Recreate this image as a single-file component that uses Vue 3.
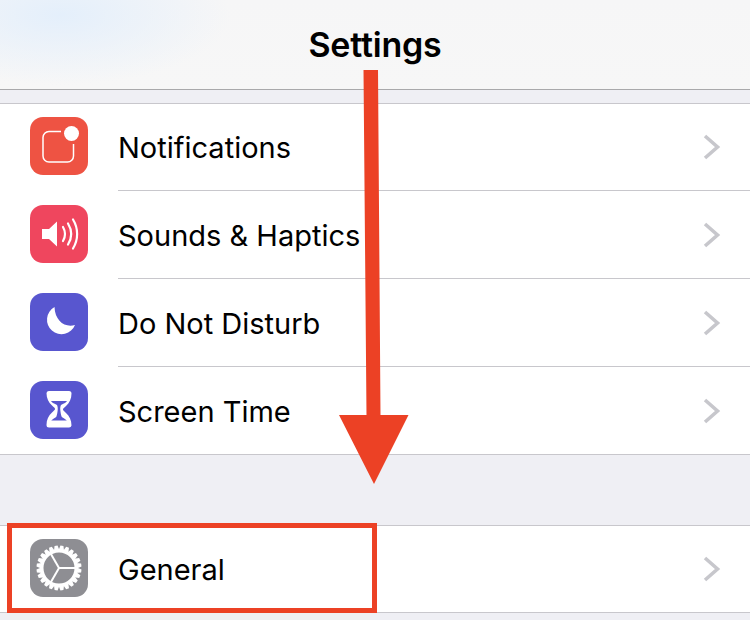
<script setup>
const firstGroup = [
  { label: 'Notifications', icon: 'notif' },
  { label: 'Sounds & Haptics', icon: 'sound' },
  { label: 'Do Not Disturb', icon: 'moon' },
  { label: 'Screen Time', icon: 'hour' },
]
const teeth = Array.from({ length: 24 }, (_, i) => i * 15)
</script>

<template>
  <div class="screen">
    <header class="nav"><h1>Settings</h1></header>
    <div class="gap-top"></div>
    <section class="group">
      <div v-for="row in firstGroup" :key="row.label" class="row">
        <span class="icon" :class="row.icon">
          <svg v-if="row.icon === 'notif'" viewBox="0 0 58 58" width="58" height="58">
            <path d="M31 14.500H19a6 6 0 0 0-6 6V39a6 6 0 0 0 6 6h18.500a6 6 0 0 0 6-6V27" fill="none" stroke="#fff" stroke-width="1.500"/>
            <circle cx="41.500" cy="16.500" r="7.500" fill="#fff"/>
          </svg>
          <svg v-else-if="row.icon === 'sound'" viewBox="0 0 58 58" width="58" height="58">
            <path d="M12 24h7l8-7.500v25L19 34h-7z" fill="#fff"/>
            <g fill="none" stroke="#fff" stroke-width="2.200" stroke-linecap="round">
              <path d="M33 22c2.600 4.500 2.600 9.500 0 14"/>
              <path d="M38 18.500c4 6.500 4 14.500 0 21"/>
              <path d="M43 14.500c5.500 9 5.500 20 0 29"/>
            </g>
          </svg>
          <svg v-else-if="row.icon === 'moon'" viewBox="0 0 58 58" width="58" height="58">
            <path d="M24.500 14A14.500 14.500 0 1 0 45 32C35 35 25 28 24.500 14z" fill="#fff"/>
          </svg>
          <svg v-else viewBox="0 0 58 58" width="58" height="58">
            <path fill="#fff" d="M19 10h20a2.500 2.500 0 0 1 2.500 2.500c0 5-2 9.500-5.500 12.500-2 1.800-3 2.700-3 3.500s1 1.700 3 3.500c3.500 3 5.500 7.500 5.500 12.500A2.500 2.500 0 0 1 39 46.500H19a2.500 2.500 0 0 1-2.500-2.500c0-5 2-9.500 5.500-12.500 2-1.800 3-2.700 3-3.500s-1-1.700-3-3.500c-3.500-3-5.500-7.500-5.500-12.500A2.500 2.500 0 0 1 19 10z"/>
            <path fill="#5856cf" d="M21 20h16c-.8 1.500-2.500 2.300-6 4-.6 1-.9 3-.7 5 .2 2.500.7 5 1.500 7 2 1 3.700 2.300 5 3.500H21.200c1.300-1.200 3-2.500 5-3.500.8-2 1.300-4.500 1.500-7 .2-2-.1-4-.7-5-3.500-1.700-5.200-2.500-6-4z"/>
          </svg>
        </span>
        <div class="body">
          <span class="label">{{ row.label }}</span>
          <svg class="chev" viewBox="0 0 18 26" width="18" height="26"><path d="M2 2l12.500 11L2 24" fill="none" stroke="#c7c7cc" stroke-width="3.600"/></svg>
        </div>
      </div>
    </section>
    <div class="gap-mid"></div>
    <section class="group second">
      <div class="row">
        <span class="icon gear">
          <svg viewBox="0 0 58 58" width="58" height="58">
            <g fill="none" stroke="#fff">
              <circle cx="29" cy="29" r="17" stroke-width="3"/>
              <g stroke-width="2">
                <path d="M29 29H46"/>
                <path d="M29 29L20.500 14.300"/>
                <path d="M29 29L20.500 43.700"/>
              </g>
            </g>
            <g fill="#fff">
              <path v-for="a in teeth" :key="a" :transform="`rotate(${a + 7.500} 29 29)`" d="M27.500 6.500h3l1.400 5.500h-5.800z"/>
            </g>
          </svg>
        </span>
        <div class="body">
          <span class="label">General</span>
          <svg class="chev" viewBox="0 0 18 26" width="18" height="26"><path d="M2 2l12.500 11L2 24" fill="none" stroke="#c7c7cc" stroke-width="3.600"/></svg>
        </div>
      </div>
    </section>

    <div class="highlight"></div>
    <svg class="arrow" viewBox="0 0 750 620" width="750" height="620">
      <path d="M363.500 70H378L380.500 415H408.500L374 484L339 415H366.500z" fill="#ec4125"/>
    </svg>
  </div>
</template>

<style>
html, body { margin: 0; padding: 0; }
</style>

<style scoped>
.screen {
  position: relative;
  width: 750px;
  height: 620px;
  overflow: hidden;
  background: #efeff4;
  font-family: Inter, "Liberation Sans", sans-serif;
  color: #000;
}
.nav {
  height: 89px;
  border-bottom: 1px solid #a9a9ab;
  background:
    radial-gradient(ellipse 170px 70px at 60px 15px, #e4effb 0%, rgba(228, 239, 251, 0) 100%),
    linear-gradient(#f6f6f7, #f7f7f7);
  display: flex;
  justify-content: center;
}
.nav h1 {
  margin: 25px 0 0;
  font-size: 34px;
  line-height: 40px;
  font-weight: 600;
  letter-spacing: -0.2px;
}
.gap-top { height: 13px; }
.gap-mid { height: 70px; }
.group {
  background: #fff;
  border-top: 1px solid #c8c7cc;
  border-bottom: 1px solid #c8c7cc;
}
.row {
  display: flex;
  align-items: stretch;
  padding-left: 30px;
}
.row + .row { height: 88px; }
.row:first-child { height: 86px; }
.icon {
  flex: none;
  align-self: flex-start;
  margin: 13px 30px 0 0;
  width: 58px;
  height: 58px;
  border-radius: 13px;
  overflow: hidden;
}
.row + .row .icon { margin-top: 15px; }
.icon svg { display: block; }
.notif { background: #ee5343; }
.sound { background: #ef465e; }
.moon { background: #5856cf; }
.hour { background: #5856cf; }
.gear { background: #8e8e93; }
.body {
  flex: 1;
  display: flex;
  align-items: center;
  padding-right: 29px;
}
.row + .row .body { border-top: 1px solid #c8c7cc; }
.label {
  flex: 1;
  margin-top: 2px;
  font-size: 29px;
  line-height: 36px;
  font-weight: 400;
}
.chev { display: block; }
.highlight {
  position: absolute;
  left: 7px;
  top: 523px;
  width: 360px;
  height: 80px;
  border: 5px solid #ec4125;
}
.arrow {
  position: absolute;
  left: 0;
  top: 0;
  pointer-events: none;
}
</style>
